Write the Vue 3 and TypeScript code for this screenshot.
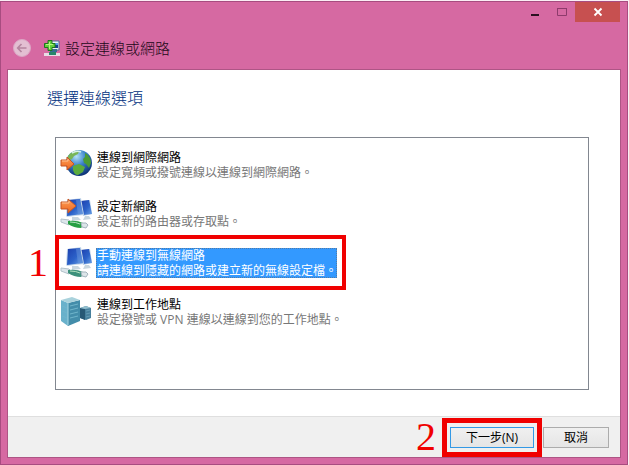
<script setup lang="ts">
import { ref } from 'vue'

interface Option {
  id: string
  title: string
  detail: string
}

const options: Option[] = [
  { id: 'internet', title: '連線到網際網路', detail: '設定寬頻或撥號連線以連線到網際網路。' },
  { id: 'router', title: '設定新網路', detail: '設定新的路由器或存取點。' },
  { id: 'wireless', title: '手動連線到無線網路', detail: '請連線到隱藏的網路或建立新的無線設定檔。' },
  { id: 'workplace', title: '連線到工作地點', detail: '設定撥號或 VPN 連線以連線到您的工作地點。' },
]

const selected = ref('wireless')
</script>

<template>
  <div class="window">
    <header class="titlebar">
      <div class="controls">
        <button class="control minimize" type="button" aria-label="最小化">
          <svg width="10" height="14" viewBox="0 0 10 14"><path d="M1 9h8v2H1z" fill="#2a1020" /></svg>
        </button>
        <button class="control maximize" type="button" aria-label="最大化">
          <svg width="12" height="10" viewBox="0 0 12 10"><path d="M1.500 1.500h9v7h-9z" fill="none" stroke="#8e3b6c" /><path d="M1 1h10v1H1z" fill="#8e3b6c" /></svg>
        </button>
        <button class="control close" type="button" aria-label="關閉">
          <svg width="10" height="10" viewBox="0 0 10 10"><path d="M1.500 1.500l7 7M8.500 1.500l-7 7" stroke="#fff" stroke-width="1.800" /></svg>
        </button>
      </div>
      <div class="caption">
        <button class="back" type="button" aria-label="上一頁">
          <svg width="18" height="18" viewBox="0 0 18 18">
            <circle cx="9" cy="9" r="8.500" fill="#e3bfd2" stroke="#dca6c5" />
            <path d="M13.500 9H5M8.500 5L4.700 9l3.800 4" fill="none" stroke="#b5859f" stroke-width="1.700" />
          </svg>
        </button>
        <svg class="app-icon" width="16" height="16" viewBox="0 0 16 16">
          <path d="M0 13h16v3H0z" fill="#eadbe5" />
          <path d="M6 1h9v9H6z" fill="#e9f2fa" stroke="#516a91" />
          <path d="M8 3h6v5H8z" fill="#173f8e" />
          <path d="M11 3h3v2h-3z" fill="#56a3e4" />
          <path d="M6 9h7v3H6z" fill="#376d91" />
          <path d="M5 12h7v3H5z" fill="#27866b" />
          <path d="M4 .500h4v3h3v4H8v3H4v-3H.500v-4H4z" fill="#62cf3b" stroke="#1e741f" />
          <path d="M5 2h1v7H5zM2 4h7v1H2z" fill="#b6f580" />
        </svg>
        <h1>設定連線或網路</h1>
      </div>
    </header>

    <main class="content">
      <h2>選擇連線選項</h2>
      <div class="options" role="listbox" aria-label="選擇連線選項">
        <button
          v-for="option in options"
          :key="option.id"
          class="option"
          :class="{ selected: selected === option.id }"
          type="button"
          role="option"
          :aria-selected="selected === option.id"
          @click="selected = option.id"
        >
          <svg v-if="option.id === 'internet'" class="icon" width="32" height="32" viewBox="0 0 32 32">
            <defs>
              <radialGradient id="ocean" cx="40%" cy="25%" r="78%">
                <stop offset="0" stop-color="#b5e2f7" />
                <stop offset="0.450" stop-color="#3c83c9" />
                <stop offset="1" stop-color="#0a2d70" />
              </radialGradient>
              <linearGradient id="orange" x1="0" y1="0" x2="0" y2="1">
                <stop offset="0" stop-color="#ffa158" />
                <stop offset="1" stop-color="#ec6520" />
              </linearGradient>
            </defs>
            <circle cx="19" cy="14" r="13" fill="url(#ocean)" />
            <path d="M8 7C11 3 15 1 19 2l-1 3-4 2-2 3-4 2z" fill="#78b657" />
            <path d="M25 4c4 2 6 6 6 10l-2 5-3-4-2-1-1-4 2-2z" fill="#4b9b35" />
            <path d="M13 17l6-2 6 3-2 5-5 3c-3 0-4-2-5-5z" fill="#5cac3d" />
            <path d="M12 4q5-3 9-1" fill="none" stroke="#d8f2e7" stroke-width="1.500" />
            <path d="M1 11h6V8l7 7-7 6v-4H1z" fill="url(#orange)" stroke="#c45524" />
            <path d="M2 12h6v-2" fill="none" stroke="#ffc294" />
          </svg>

          <svg v-else-if="option.id === 'router' || option.id === 'wireless'" class="icon" width="32" height="32" viewBox="0 0 32 32">
            <defs>
              <linearGradient :id="'screen-' + option.id" x1="0" y1="0" x2="1" y2="1">
                <stop offset="0" stop-color="#1c3fae" />
                <stop offset="0.550" stop-color="#2c62c9" />
                <stop offset="1" stop-color="#6ca3e6" />
              </linearGradient>
            </defs>
            <path d="M25 18h4l2 3-8 1zM12 19h6l3 3-9 1z" fill="#c8d6df" />
            <path d="M20 3l10-1 2 14-9 2z" fill="#b8cee5" />
            <path d="M21 3l8-1 3 14-9 1z" :fill="'url(#screen-' + option.id + ')'" />
            <path d="M7 2l14-2 3 17-17 2-1-1z" fill="#c8daeb" />
            <path d="M8 2l12-1 3 15-16 2z" :fill="'url(#screen-' + option.id + ')'" />
            <path d="M16 2l4-1 3 15-5 1z" fill="#6796dc" opacity="0.500" />
            <path d="M1 21l8 1 2 2-2 3-8-3z" fill="#dce6eb" stroke="#b3c2cb" />
            <path d="M8 23q9-1 15 2l1 2-3 3q-7 0-13-4z" :fill="option.id === 'router' ? '#27a044' : '#3d917c'" />
            <path d="M21 25h5l2 2-2 3-4-1z" fill="#dce5e9" stroke="#a4b4bd" />
            <path d="M10 24q6 0 10 2" fill="none" stroke="#b3e2c0" />
            <template v-if="option.id === 'router'">
              <path d="M1 4h7V1l8 7-8 7v-4H1z" fill="url(#orange)" stroke="#c45524" />
              <path d="M2 5h7V3" fill="none" stroke="#ffc294" />
            </template>
          </svg>

          <svg v-else class="icon" width="32" height="32" viewBox="0 0 32 32">
            <path d="M20 12l6-2 5 2v10l-5 2-6-2z" fill="#477f9c" />
            <path d="M20 12l5 1v11l-5-2z" fill="#285875" />
            <path d="M20 12l6-2 5 2-6 1z" fill="#93bfce" />
            <path d="M26 15l4-1M26 18l4-1M26 21l4-1" stroke="#659bb5" />
            <path d="M1 4l7 3v23l-7-5z" fill="#69b1cb" />
            <path d="M8 7l12-3v21L8 30z" fill="#438daa" />
            <path d="M1 4l11-3 8 3L8 7z" fill="#a9d2dc" />
            <path d="M2 10l5 2M2 15l5 2M2 20l5 2M10 10l8-2M10 14l8-2M10 18l8-2M10 22l8-2" stroke="#70b5cb" />
            <path d="M8 7v22" stroke="#a5d3df" />
          </svg>

          <span class="text">
            <span class="title">{{ option.title }}</span>
            <span class="detail">{{ option.detail }}</span>
          </span>
          <span v-if="option.id === 'wireless'" class="marker" aria-hidden="true"><span class="number">1</span></span>
        </button>
      </div>
    </main>

    <footer class="footer">
      <div class="next-wrap">
        <button class="push primary" type="button">下一步(N)</button>
        <span class="marker" aria-hidden="true"><span class="number">2</span></span>
      </div>
      <button class="push cancel" type="button">取消</button>
    </footer>
  </div>
</template>

<style>
body {
  margin: 0;
  background: #fbeef5;
}
</style>

<style scoped>
* {
  box-sizing: border-box;
}

.window {
  display: flex;
  flex-direction: column;
  min-height: calc(100vh - 1px);
  margin: 1px 1px 0 0;
  padding: 0 7px 7px;
  border: 1px solid #a84c80;
  background: #d669a2;
  color: #000;
  font-family: "Open Sans", "Noto Sans CJK TC", sans-serif;
  font-size: 12px;
  line-height: 15px;
}

button {
  margin: 0;
  padding: 0;
  border: 0;
  background: none;
  color: inherit;
  font: inherit;
}

.titlebar {
  height: 67px;
}

.controls {
  display: flex;
  justify-content: flex-end;
  height: 20px;
}

.control {
  display: flex;
  align-items: center;
  justify-content: center;
  width: 27px;
}

.close {
  width: 45px;
  background: #c75050;
}

.caption {
  display: flex;
  align-items: center;
  height: 20px;
  margin-top: 16px;
  padding-left: 5px;
}

.back {
  display: flex;
}

.app-icon {
  margin: 0 5px 0 13px;
}

h1 {
  margin: 0;
  color: #220818;
  font-size: 15px;
  font-weight: 300;
  line-height: 20px;
}

.content {
  flex: 1;
  display: flex;
  flex-direction: column;
  padding: 16px 31px 26px 39px;
  border: 1px solid #ae5585;
  border-bottom: 0;
  margin: 0 -1px;
  background: #fff;
  background-clip: padding-box;
}

h2 {
  margin: 0 0 27px;
  color: #003080;
  font-size: 16px;
  font-weight: 300;
  line-height: 24px;
}

.options {
  flex: 1;
  margin-left: 8px;
  padding: 2px 0;
  border: 1px solid #828790;
}

.option {
  position: relative;
  display: flex;
  align-items: center;
  gap: 4px;
  height: 49px;
  padding-left: 4px;
  text-align: left;
}

.text {
  display: flex;
  flex-direction: column;
  padding-left: 1px;
  white-space: nowrap;
}

.detail {
  color: #777;
}

.selected .text {
  background: #3399ff;
  color: #fff;
  outline: 1px dotted #557ba4;
  outline-offset: -1px;
}

.selected .detail {
  color: #fff;
}

.marker {
  position: absolute;
  inset: -3px -9px -3px -1px;
  border: 4px solid #f00000;
  pointer-events: none;
}

.number {
  position: absolute;
  right: 100%;
  top: 50%;
  margin-right: 11px;
  transform: translateY(-50%);
  color: #f00000;
  font-family: "Liberation Serif", serif;
  font-size: 40px;
  line-height: 40px;
}

.footer {
  display: flex;
  align-items: center;
  justify-content: flex-end;
  gap: 9px;
  height: 41px;
  padding-right: 11px;
  border-top: 1px solid #dfdfdf;
  background: #f0f0f0;
  outline: 1px solid #ae5585;
  clip-path: inset(0 -1px -1px);
}

.next-wrap {
  position: relative;
  display: flex;
}

.next-wrap .marker {
  inset: -9px -8px;
  border-width: 5px;
}

.push {
  height: 21px;
  border: 1px solid #acacac;
  background: linear-gradient(#f0f0f0, #e5e5e5);
  line-height: 17px;
}

.primary {
  width: 84px;
  border-color: #3399e5;
}

.cancel {
  width: 66px;
}
</style>
